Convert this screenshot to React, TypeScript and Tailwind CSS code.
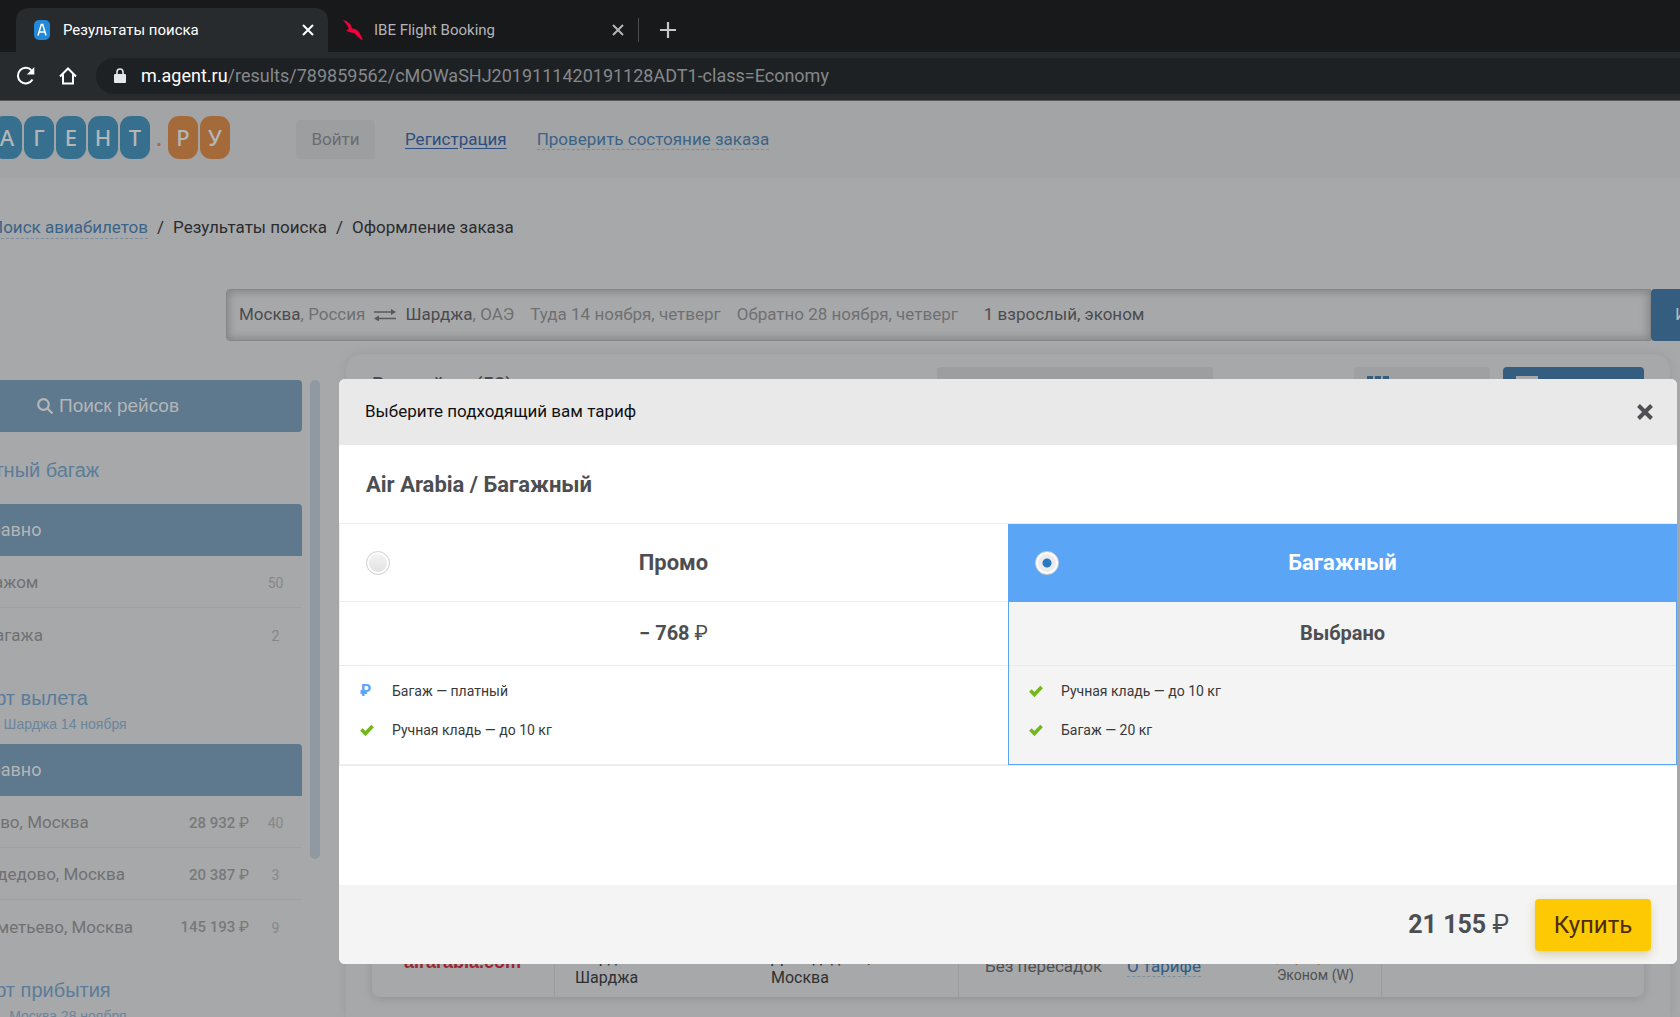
import { useState, type ReactNode } from 'react';

type Feature = { kind: 'paid' | 'included'; text: string };

type Fare = {
  id: string;
  name: string;
  diff: string;
  features: Feature[];
};

const FARES: Fare[] = [
  {
    id: 'promo',
    name: 'Промо',
    diff: '− 768',
    features: [
      { kind: 'paid', text: 'Багаж — платный' },
      { kind: 'included', text: 'Ручная кладь — до 10 кг' },
    ],
  },
  {
    id: 'baggage',
    name: 'Багажный',
    diff: '+ 768',
    features: [
      { kind: 'included', text: 'Ручная кладь — до 10 кг' },
      { kind: 'included', text: 'Багаж — 20 кг' },
    ],
  },
];

const BAGGAGE = [
  { name: 'С багажом', count: 50 },
  { name: 'Без багажа', count: 2 },
];

const AIRPORTS = [
  { name: 'Внуково, Москва', price: '28 932', count: 40 },
  { name: 'Домодедово, Москва', price: '20 387', count: 3 },
  { name: 'Шереметьево, Москва', price: '145 193', count: 9 },
];

function Price({ value }: { value: string }) {
  return (
    <>
      {value} <span className="font-normal">₽</span>
    </>
  );
}

function CrossIcon({ className }: { className: string }) {
  return (
    <svg className={className} viewBox="0 0 12 12" fill="none" stroke="currentColor" strokeWidth={2}>
      <path d="M1 1l10 10M11 1L1 11" />
    </svg>
  );
}

function CheckIcon() {
  return (
    <svg className="h-3 w-[14px] text-[#74b71b]" viewBox="0 0 14 12" fill="none" stroke="currentColor" strokeWidth={3.6}>
      <path d="M1.4 5.6l4 4L12.6 2" />
    </svg>
  );
}

function BrowserChrome() {
  return (
    <div className="shrink-0 bg-[#18191b]">
      {/* Tabs */}
      <div className="flex h-[52px] items-end pl-4">
        <div className="flex h-11 w-[312px] items-center rounded-t-xl bg-[#272b2d] pr-[14px] pl-[18px] text-white">
          <svg className="h-5 w-4" viewBox="0 0 16 20">
            <rect width="16" height="20" rx="5" fill="#2488d8" />
            <path d="M4 15.500L7.300 4.500h1.400L12 15.500M5.200 12h5.600" fill="none" stroke="#fff" strokeWidth="1.500" />
          </svg>
          <span className="ml-[13px] flex-1 text-[15px]">Результаты поиска</span>
          <button aria-label="Закрыть вкладку">
            <CrossIcon className="h-3 w-3" />
          </button>
        </div>
        <div className="flex h-11 w-[310px] items-center pr-[14px] pl-[15px] text-[#b3b5b8]">
          <svg className="h-5 w-5" viewBox="0 0 20 20" fill="#f3003a">
            <path d="M0 0c5 1.500 8.500 4 9 8.500 2.500.1 4.500.8 6 2.500 2 2.500 3.500 5.500 5 9-4-1.500-6.500-4-8.500-7-3.500 0-6-.8-8.500-3 2 0 3.200-.5 2.500-2.200C4.500 5 2 3 0 0z" />
          </svg>
          <span className="ml-[11px] flex-1 text-[15px]">IBE Flight Booking</span>
          <button aria-label="Закрыть вкладку">
            <CrossIcon className="h-3 w-3" />
          </button>
        </div>
        <div className="flex h-11 items-center gap-[21px] text-[#c5c7c9]">
          <span className="h-6 w-px bg-[#4b4d50]" />
          <button aria-label="Новая вкладка">
            <svg className="h-4 w-4" viewBox="0 0 16 16" stroke="currentColor" strokeWidth={2.200}>
              <path d="M8 0v16M0 8h16" />
            </svg>
          </button>
        </div>
      </div>

      {/* Address bar */}
      <div className="flex h-[49px] items-center border-b border-[#58595b] bg-[#272b2d] pl-4 text-white">
        <button aria-label="Обновить">
          <svg className="h-5 w-5" viewBox="0 0 20 20" fill="none" stroke="currentColor" strokeWidth={2}>
            <path d="M16.500 13.500A7.800 7.800 0 1 1 16 5" />
            <path d="M18.300 1v7.500h-7.500z" fill="currentColor" stroke="none" />
          </svg>
        </button>
        <button aria-label="Домой" className="ml-[22px]">
          <svg className="h-5 w-5" viewBox="0 0 20 20" fill="none" stroke="currentColor" strokeWidth={2}>
            <path d="M2 10.500l8-8 8 8M5 8.500v9h10v-9" />
          </svg>
        </button>
        <div className="ml-[18px] flex h-9 flex-1 items-center rounded-l-full bg-[#1e2123] pl-[18px]">
          <svg className="h-4 w-3" viewBox="0 0 12 16">
            <rect y="6" width="12" height="9" rx="1" fill="#e6e7e8" />
            <path d="M3 7V4a3 3 0 0 1 6 0v3" fill="none" stroke="#e6e7e8" strokeWidth="1.600" />
          </svg>
          <span className="ml-[15px] text-lg text-[#85888b]">
            <span className="text-white">m.agent.ru</span>/results/789859562/cMOWaSHJ2019111420191128ADT1-class=Economy
          </span>
        </div>
      </div>
    </div>
  );
}

function LogoTile({ children, orange = false }: { children: string; orange?: boolean }) {
  return (
    <span
      className={`flex h-[43px] w-[30px] items-center justify-center rounded-[11px] font-['Noto_Sans',sans-serif] text-[22px] font-medium text-[#b4b6b8] ${
        orange ? 'bg-[#a56a3a]' : 'bg-[#37708f]'
      }`}
    >
      {children}
    </span>
  );
}

function SiteHeader() {
  return (
    <header className="flex h-[77px] items-center bg-[#a3a4a6] text-[17px]">
      <a href="#" className="-ml-2 flex shrink-0 gap-[2px] pb-1">
        {['А', 'Г', 'Е', 'Н', 'Т'].map((letter) => (
          <LogoTile key={letter}>{letter}</LogoTile>
        ))}
        <span className="flex w-[14px] items-center justify-center font-['Noto_Sans',sans-serif] text-[22px] font-medium text-[#a56a3a]">.</span>
        <LogoTile orange>Р</LogoTile>
        <LogoTile orange>У</LogoTile>
      </a>
      <button className="ml-[66px] h-[39px] w-[79px] rounded bg-[#9d9ea0] text-[#6b6c6e]">Войти</button>
      <a href="#" className="ml-[30px] text-[#2d4e81] underline underline-offset-3">
        Регистрация
      </a>
      <a href="#" className="ml-[30px] border-b border-dashed border-[#7c8e9e] leading-5 text-[#3a6388]">
        Проверить состояние заказа
      </a>
    </header>
  );
}

function Breadcrumbs() {
  return (
    <nav className="-ml-[9px] flex h-[99px] items-center gap-[9px] text-[17px] text-[#2b2c2e]">
      <a href="#" className="border-b border-dashed border-[#7c8e9e] leading-[22px] text-[#3a6388]">
        Поиск авиабилетов
      </a>
      <span>/</span>
      <span>Результаты поиска</span>
      <span>/</span>
      <span>Оформление заказа</span>
    </nav>
  );
}

function SearchSummary() {
  return (
    <div className="mt-3 ml-[226px] flex h-[52px] shrink-0 text-[17px] text-[#6f7072]">
      <div className="flex flex-1 items-center rounded-l border border-[#858688] pl-3 whitespace-nowrap shadow-[inset_0_0_9px_2px_#848587]">
        <span>
          <span className="text-[#4b4c4e]">Москва</span>, Россия
        </span>
        <svg className="mx-[9px] h-3 w-[22px] text-[#58595b]" viewBox="0 0 22 12" fill="none" stroke="currentColor" strokeWidth={1.400}>
          <path d="M0 3h18M4 9.500h18" />
          <path d="M17 0l5 3-5 3zM5 6.500l-5 3 5 3z" fill="currentColor" stroke="none" />
        </svg>
        <span>
          <span className="text-[#4b4c4e]">Шарджа</span>, ОАЭ
        </span>
        <span className="ml-4">Туда 14 ноября, четверг</span>
        <span className="ml-4">Обратно 28 ноября, четверг</span>
        <span className="ml-[26px] text-[#4b4c4e]">1 взрослый, эконом</span>
      </div>
      <button className="w-[29px] overflow-hidden rounded-l bg-[#355d7f] pl-6 text-left whitespace-nowrap text-[#b4b8bc]">Изменить</button>
    </div>
  );
}

function FilterHeading({ title, note }: { title: string; note?: string }) {
  return (
    <div className="pt-6 pb-2 font-['Liberation_Sans',Arial,sans-serif] text-[#5b7c99]">
      <h3 className="pl-[13px] text-xl leading-7">{title}</h3>
      {note && <p className="pl-5 text-sm leading-6 text-[#6b859b]">{note}</p>}
    </div>
  );
}

function FilterBar() {
  return <div className="flex h-[52px] items-center rounded-t bg-[#5e788d] pl-[42px] text-lg text-[#b4b6b8]">Все равно</div>;
}

function FilterRow({ name, price, count }: { name: string; price?: string; count: number }) {
  return (
    <li className="flex h-[52px] items-center border-b border-[#9fa0a2] pt-[3px] pl-[39px] text-[17px] text-[#707173] last:border-0">
      <span className="flex-1">{name}</span>
      {price && (
        <span className="text-[15px] font-medium text-[#78797b]">
          <Price value={price} />
        </span>
      )}
      <span className="w-[53px] text-center text-sm text-[#868789]">{count}</span>
    </li>
  );
}

function Sidebar() {
  return (
    <aside className="-ml-[86px] flex shrink-0 items-start gap-2 overflow-hidden pt-[39px]">
      <div className="w-[388px]">
        <button className="flex h-[52px] w-full items-center justify-center gap-[6px] rounded bg-[#5e788d] font-['Liberation_Sans',Arial,sans-serif] text-[19px] text-[#b4b6b8]">
          <svg className="h-4 w-4" viewBox="0 0 16 16" fill="none" stroke="currentColor" strokeWidth={2.200}>
            <circle cx="6.500" cy="6.500" r="5.300" />
            <path d="M10.500 10.500l5 5" />
          </svg>
          Поиск рейсов
        </button>
        <div className="pb-3">
          <FilterHeading title="Бесплатный багаж" />
        </div>
        <FilterBar />
        <ul>
          {BAGGAGE.map((row) => (
            <FilterRow key={row.name} {...row} />
          ))}
        </ul>
        <FilterHeading title="Аэропорт вылета" note="Москва — Шарджа 14 ноября" />
        <FilterBar />
        <ul>
          {AIRPORTS.map((row) => (
            <FilterRow key={row.name} {...row} />
          ))}
        </ul>
        <FilterHeading title="Аэропорт прибытия" note="Шарджа — Москва 28 ноября" />
      </div>
      <div className="h-[479px] w-[10px] rounded-full bg-[#9099a1]" />
    </aside>
  );
}

function Results() {
  return (
    <main className="mt-[13px] mr-[10px] ml-[26px] flex flex-1 flex-col rounded-t-2xl px-[26px] pt-[13px] pb-5 shadow-[0_0_10px_#98999b]">
      <div className="flex items-start">
        <h2 className="mt-1 flex-1 text-xl font-medium text-[#4b4c4e]">Все рейсы (52)</h2>
        <div className="mr-[141px] h-10 w-[276px] rounded bg-[#9d9ea0]" />
        <div className="mr-[13px] h-10 w-[136px] rounded bg-[#9fa0a2] px-[13px] pt-[9px]">
          <svg className="h-4 w-[22px]" viewBox="0 0 22 16" fill="#355d7f">
            <path d="M0 0h6v4H0zM8 0h6v4H8zM16 0h6v4h-6z" />
          </svg>
        </div>
        <div className="h-10 w-[141px] rounded bg-[#355d7f] px-[13px] pt-[9px]">
          <svg className="h-4 w-[22px]" viewBox="0 0 22 16" fill="#a7a8aa">
            <path d="M0 0h22v4H0z" />
          </svg>
        </div>
      </div>

      {/* Ticket */}
      <div className="mt-8 flex flex-1 items-stretch rounded-lg text-base text-[#2f3032] shadow-[0_2px_10px_#929395]">
        <div className="flex w-[182px] flex-col justify-end pb-[21px] pl-8 font-['Liberation_Sans',Arial,sans-serif] text-lg font-bold text-[#9c2733]">
          airarabia.com
        </div>
        <div className="flex w-[404px] items-end border-l border-[#9b9c9e] pb-[9px] pl-5 leading-5">
          <p className="w-[196px]">
            Шарджа
            <br />
            Шарджа
          </p>
          <p>
            Домодедово,
            <br />
            Москва
          </p>
        </div>
        <div className="flex w-[423px] items-end border-l border-[#9b9c9e] pb-[18px] pl-[26px] text-[#505153]">
          <span className="w-[142px] text-[17px]">Без пересадок</span>
          <a href="#" className="mb-[2px] border-b border-dashed border-[#7c8e9e] text-[17px] leading-5 text-[#2f5b84]">
            О тарифе
          </a>
          <p className="-mb-[5px] ml-10 flex-1 text-base leading-[18px] text-[#a5642c]">
            Спецтариф
            <span className="block pl-9 text-sm leading-[18px] text-[#505153]">Эконом (W)</span>
          </p>
        </div>
        <div className="flex-1 border-l border-[#9b9c9e]" />
      </div>
    </main>
  );
}

function FareColumn({ fare, selected, onSelect }: { fare: Fare; selected: boolean; onSelect: () => void }) {
  return (
    <div className={`border border-t-0 ${selected ? 'border-[#5aa5f5] bg-[#f4f4f4]' : 'border-[#ededed] border-r-transparent'}`}>
      <label
        className={`flex h-[78px] items-center border-b px-[26px] text-[22px] font-bold ${
          selected ? 'border-[#5aa5f5] bg-[#5aa5f5] text-white' : 'border-[#ededed]'
        }`}
      >
        <input
          type="radio"
          name="fare"
          checked={selected}
          onChange={onSelect}
          className="h-6 w-6 appearance-none rounded-full border border-[#d2d2d2] bg-linear-to-b from-[#f6f6f6] to-[#dfdfdf] shadow-[inset_0_0_0_2px_#fcfcfc] checked:bg-[radial-gradient(circle,#2779c1_4px,#ebebeb_5px)]"
        />
        <span className="flex-1 pr-6 text-center">{fare.name}</span>
      </label>
      <div className="flex h-16 items-center justify-center border-b border-[#ebebeb] pb-[2px] text-xl font-bold">
        <span>{selected ? 'Выбрано' : <Price value={fare.diff} />}</span>
      </div>
      <ul className="h-[98px] pt-[5px] text-sm text-[#38393b]">
        {fare.features.map((feature) => (
          <li key={feature.text} className="flex h-[39px] items-center pl-5">
            <span className="w-8">
              {feature.kind === 'paid' ? <span className="text-base font-bold text-[#5aa5f5]">₽</span> : <CheckIcon />}
            </span>
            {feature.text}
          </li>
        ))}
      </ul>
    </div>
  );
}

function FareDialog() {
  const [fareId, setFareId] = useState('baggage');

  return (
    <div role="dialog" aria-label="Выбор тарифа" className="w-full overflow-hidden rounded-md bg-white text-[#4d4e51]">
      <div className="flex h-[66px] items-center justify-between bg-[#e9e9e9] pr-6 pl-[26px] text-[17px] text-[#111]">
        <h1>Выберите подходящий вам тариф</h1>
        <button aria-label="Закрыть" className="text-[#4f5053]">
          <svg className="h-4 w-4" viewBox="0 0 16 16" stroke="currentColor" strokeWidth={4}>
            <path d="M1.500 1.500l13 13M14.500 1.500l-13 13" />
          </svg>
        </button>
      </div>
      <h2 className="flex h-[79px] items-center border-b border-[#ededed] pl-[27px] text-[22px] font-bold">Air Arabia / Багажный</h2>
      <div className="grid grid-cols-2 border-b border-[#ededed]">
        {FARES.map((fare) => (
          <FareColumn key={fare.id} fare={fare} selected={fare.id === fareId} onSelect={() => setFareId(fare.id)} />
        ))}
      </div>
      <div className="mt-[119px] flex h-[79px] items-center justify-end gap-[26px] bg-[#f4f4f4] pr-[26px]">
        <span className="text-[25px] font-bold">
          <Price value="21 155" />
        </span>
        <button className="h-[52px] w-[116px] rounded bg-[#fdc903] text-2xl text-[#4c2d0b] shadow-[0_4px_10px_#d9cfae]">Купить</button>
      </div>
    </div>
  );
}

function Overlay({ children }: { children: ReactNode }) {
  return <div className="absolute inset-0 flex items-start pt-[278px] pr-[3px] pl-[339px]">{children}</div>;
}

export default function App() {
  return (
    <div className="flex h-screen flex-col overflow-hidden font-[Roboto,sans-serif]">
      <BrowserChrome />
      <div className="relative flex min-h-0 flex-1 flex-col overflow-hidden bg-[#a7a8aa]">
        <SiteHeader />
        <Breadcrumbs />
        <SearchSummary />
        <div className="flex min-h-0 flex-1">
          <Sidebar />
          <Results />
        </div>
        <Overlay>
          <FareDialog />
        </Overlay>
      </div>
    </div>
  );
}
